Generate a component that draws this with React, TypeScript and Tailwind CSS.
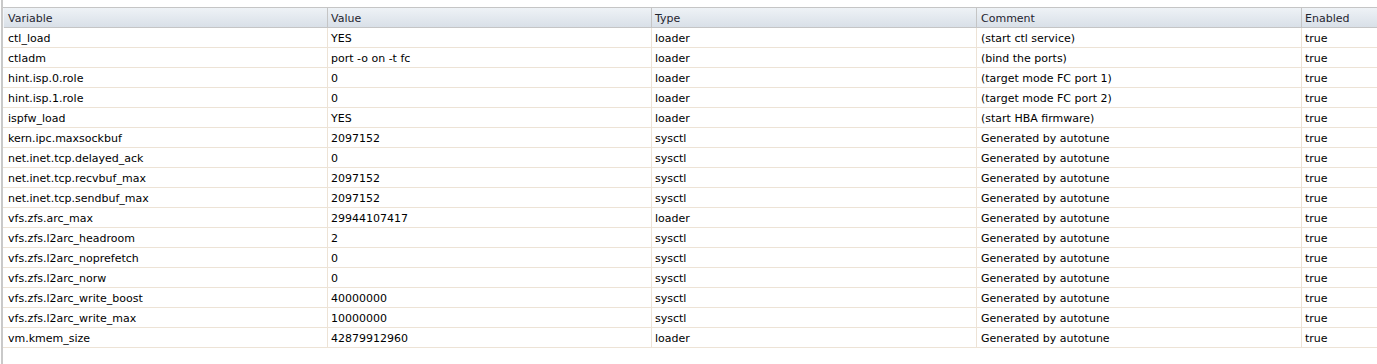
import React from 'react'

type Row = {
  variable: string
  value: string
  type: string
  comment: string
  enabled: string
}

const rows: Row[] = [
  { variable: 'ctl_load', value: 'YES', type: 'loader', comment: '(start ctl service)', enabled: 'true' },
  { variable: 'ctladm', value: 'port -o on -t fc', type: 'loader', comment: '(bind the ports)', enabled: 'true' },
  { variable: 'hint.isp.0.role', value: '0', type: 'loader', comment: '(target mode FC port 1)', enabled: 'true' },
  { variable: 'hint.isp.1.role', value: '0', type: 'loader', comment: '(target mode FC port 2)', enabled: 'true' },
  { variable: 'ispfw_load', value: 'YES', type: 'loader', comment: '(start HBA firmware)', enabled: 'true' },
  { variable: 'kern.ipc.maxsockbuf', value: '2097152', type: 'sysctl', comment: 'Generated by autotune', enabled: 'true' },
  { variable: 'net.inet.tcp.delayed_ack', value: '0', type: 'sysctl', comment: 'Generated by autotune', enabled: 'true' },
  { variable: 'net.inet.tcp.recvbuf_max', value: '2097152', type: 'sysctl', comment: 'Generated by autotune', enabled: 'true' },
  { variable: 'net.inet.tcp.sendbuf_max', value: '2097152', type: 'sysctl', comment: 'Generated by autotune', enabled: 'true' },
  { variable: 'vfs.zfs.arc_max', value: '29944107417', type: 'loader', comment: 'Generated by autotune', enabled: 'true' },
  { variable: 'vfs.zfs.l2arc_headroom', value: '2', type: 'sysctl', comment: 'Generated by autotune', enabled: 'true' },
  { variable: 'vfs.zfs.l2arc_noprefetch', value: '0', type: 'sysctl', comment: 'Generated by autotune', enabled: 'true' },
  { variable: 'vfs.zfs.l2arc_norw', value: '0', type: 'sysctl', comment: 'Generated by autotune', enabled: 'true' },
  { variable: 'vfs.zfs.l2arc_write_boost', value: '40000000', type: 'sysctl', comment: 'Generated by autotune', enabled: 'true' },
  { variable: 'vfs.zfs.l2arc_write_max', value: '10000000', type: 'sysctl', comment: 'Generated by autotune', enabled: 'true' },
  { variable: 'vm.kmem_size', value: '42879912960', type: 'loader', comment: 'Generated by autotune', enabled: 'true' },
]

// column widths include the 1px divider on the right
const cols = 'grid grid-cols-[325px_324px_325px_325px_1fr]'

export default function App() {
  return (
    <div className="h-[364px] w-[1377px] overflow-hidden bg-white font-['DejaVu_Sans',sans-serif] text-[11px]">
      <div className="ml-px h-full border-l-2 border-[#c9c9c9] pt-[7px]">
        {/* column headers */}
        <div className={`${cols} h-[21px] border-y border-[#c5c5c5] bg-gradient-to-b from-[#eef2f6] to-[#d9e0e8] text-[#1f2530]`}>
          <div className="border-l border-[#f4f6f9] border-r border-r-[#c5c5c5] pl-[4px] pt-px leading-[19px]">Variable</div>
          <div className="border-r border-[#c5c5c5] pl-[3px] pt-px leading-[19px]">Value</div>
          <div className="border-r border-[#c5c5c5] pl-[3px] pt-px leading-[19px]">Type</div>
          <div className="border-r border-[#c5c5c5] pl-[4px] pt-px leading-[19px]">Comment</div>
          <div className="pl-[3px] pt-px leading-[19px]">Enabled</div>
        </div>

        {/* rows */}
        {rows.map((r) => (
          <div key={r.variable} className={`${cols} h-[20px] border-b border-[#ede3d6] text-black`}>
            <div className="border-r border-[#ede3d6] pl-[5px] pt-[2px] leading-[17px] whitespace-nowrap">{r.variable}</div>
            <div className="border-r border-[#ede3d6] pl-[3px] pt-[2px] leading-[17px] whitespace-nowrap">{r.value}</div>
            <div className="border-r border-[#ede3d6] pl-[3px] pt-[2px] leading-[17px] whitespace-nowrap">{r.type}</div>
            <div className="border-r border-[#ede3d6] pl-[4px] pt-[2px] leading-[17px] whitespace-nowrap">{r.comment}</div>
            <div className="pl-[3px] pt-[2px] leading-[17px] whitespace-nowrap">{r.enabled}</div>
          </div>
        ))}
      </div>
    </div>
  )
}
